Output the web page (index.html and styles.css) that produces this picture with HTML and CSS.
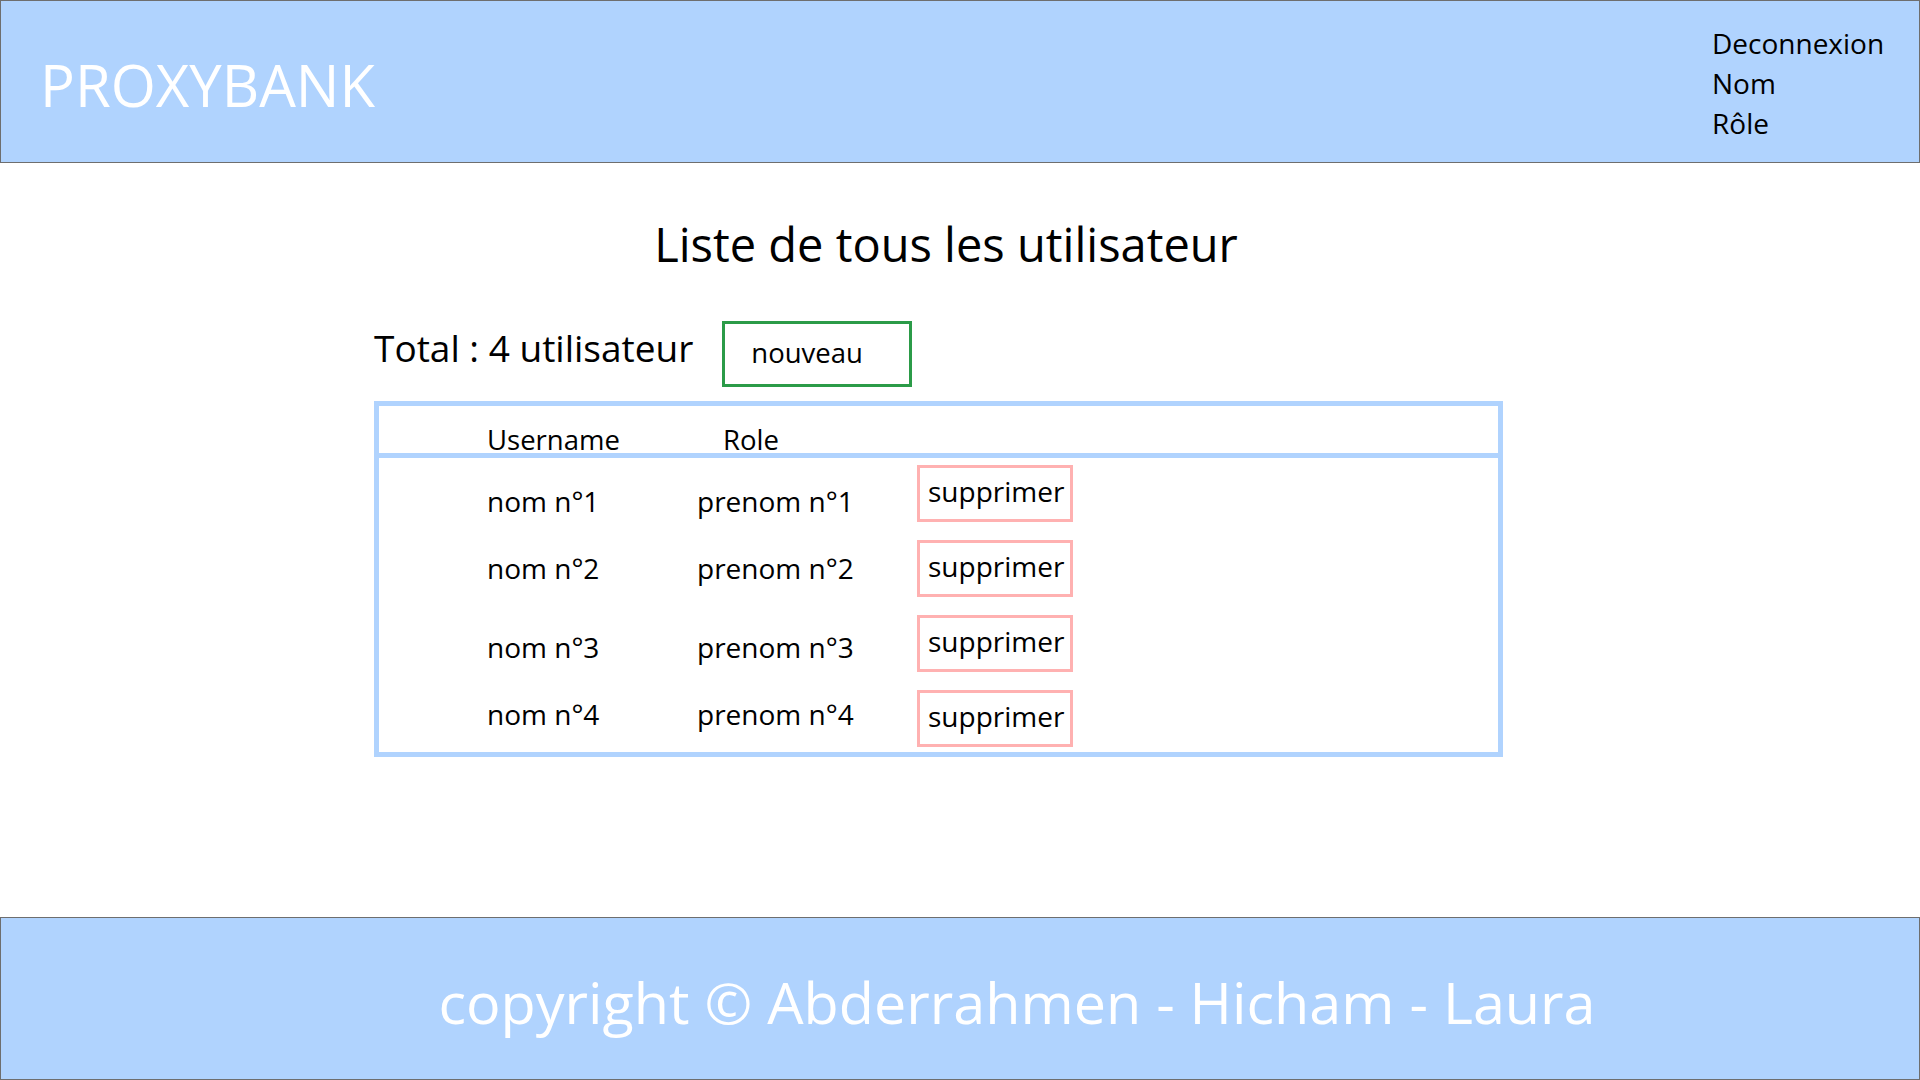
FILE: index.html
```html
<!DOCTYPE html>
<html lang="fr">
<head>
<meta charset="utf-8">
<title>ProxyBank - Utilisateurs</title>
<link rel="stylesheet" href="styles.css">
</head>
<body>
<div class="page">
  <header class="topbar">
    <div class="brand">PROXYBANK</div>
    <nav class="usermenu">
      <a class="usermenu-item" href="#">Deconnexion</a>
      <span class="usermenu-item">Nom</span>
      <span class="usermenu-item">Rôle</span>
    </nav>
  </header>

  <main class="content">
    <h1 class="title">Liste de tous les utilisateur</h1>
    <div class="summary">
      <span class="total">Total : 4 utilisateur</span>
      <button class="btn-new">nouveau</button>
    </div>
    <div class="table">
      <div class="thead">
        <span class="th th-user">Username</span>
        <span class="th th-role">Role</span>
      </div>
      <div class="tbody">
        <div class="row">
          <span class="cell cell-nom">nom n°1</span>
          <span class="cell cell-prenom">prenom n°1</span>
          <button class="btn-del">supprimer</button>
        </div>
        <div class="row">
          <span class="cell cell-nom">nom n°2</span>
          <span class="cell cell-prenom">prenom n°2</span>
          <button class="btn-del">supprimer</button>
        </div>
        <div class="row">
          <span class="cell cell-nom">nom n°3</span>
          <span class="cell cell-prenom">prenom n°3</span>
          <button class="btn-del">supprimer</button>
        </div>
        <div class="row">
          <span class="cell cell-nom">nom n°4</span>
          <span class="cell cell-prenom">prenom n°4</span>
          <button class="btn-del">supprimer</button>
        </div>
      </div>
    </div>
  </main>

  <footer class="footbar">
    <p class="copyright">copyright © Abderrahmen - Hicham - Laura</p>
  </footer>
</div>
</body>
</html>
```

FILE: styles.css
```css
* {
  box-sizing: border-box;
}

html, body {
  margin: 0;
  padding: 0;
  background: #ffffff;
}

body {
  font-family: "Open Sans", "Noto Sans", "DejaVu Sans", sans-serif;
  color: #000000;
}

.page {
  width: 1920px;
  height: 1080px;
  display: flex;
  flex-direction: column;
}

/* ---------- top bar ---------- */
.topbar {
  height: 163px;
  flex: 0 0 163px;
  background: #b0d3fe;
  border: 1px solid #6e6e6e;
  display: flex;
  align-items: flex-start;
  justify-content: space-between;
  padding: 0 35px 0 39px;
}

.brand {
  color: #ffffff;
  font-size: 58px;
  line-height: 1;
  margin-top: 55px;
}

.usermenu {
  display: flex;
  flex-direction: column;
  width: 172px;
  margin-top: 22px;
}

.usermenu-item {
  font-size: 28px;
  line-height: 40px;
  color: #000000;
  text-decoration: none;
  white-space: nowrap;
}

/* ---------- content ---------- */
.content {
  flex: 1 1 auto;
  padding-left: 374px;
}

.title {
  margin: 0 0 0 -374px;
  padding: 51px 0 0 0;
  width: 1892px;
  text-align: center;
  font-weight: 400;
  font-size: 47px;
  line-height: 60px;
}

.summary {
  display: flex;
  align-items: flex-start;
  margin-top: 47px;
  height: 66px;
}

.total {
  font-size: 37px;
  line-height: 54px;
  margin-right: 29px;
}

.btn-new {
  width: 190px;
  height: 66px;
  border: 3px solid #2b9b48;
  background: #ffffff;
  font-family: inherit;
  font-size: 27.5px;
  text-align: left;
  padding: 0 0 4px 26px;
  color: #000000;
}

/* ---------- table ---------- */
.table {
  margin-top: 14px;
  width: 1129px;
  border: 5px solid #b0d3fe;
}

.thead {
  display: flex;
  align-items: flex-end;
  height: 52px;
  border-bottom: 5px solid #b0d3fe;
  padding-left: 108px;
}

.th {
  font-size: 27.5px;
  line-height: 26px;
}

.th-user {
  width: 236px;
}

.tbody {
  display: flex;
  flex-direction: column;
  gap: 18px;
  padding: 7px 0 5px 108px;
}

.row {
  display: flex;
  align-items: flex-start;
  height: 57px;
}

.cell {
  font-size: 28px;
  line-height: 34px;
}

.cell-nom {
  width: 210px;
}

.cell-prenom {
  width: 220px;
}

.row:nth-child(1) .cell { padding-top: 19px; }
.row:nth-child(2) .cell { padding-top: 11px; }
.row:nth-child(3) .cell { padding-top: 15px; }
.row:nth-child(4) .cell { padding-top: 7px; }

.btn-del {
  width: 156px;
  height: 57px;
  border: 3px solid #ffb1b1;
  background: #ffffff;
  font-family: inherit;
  font-size: 28px;
  line-height: 32px;
  color: #000000;
  text-align: left;
  padding: 0 0 6px 8px;
  display: block;
}

/* ---------- footer ---------- */
.footbar {
  height: 163px;
  flex: 0 0 163px;
  background: #b0d3fe;
  border: 1px solid #6e6e6e;
  display: flex;
  align-items: center;
  justify-content: center;
}

.copyright {
  margin: 0 0 0 114px;
  color: #ffffff;
  font-size: 57.5px;
  line-height: 1;
  padding-top: 8px;
}
```
